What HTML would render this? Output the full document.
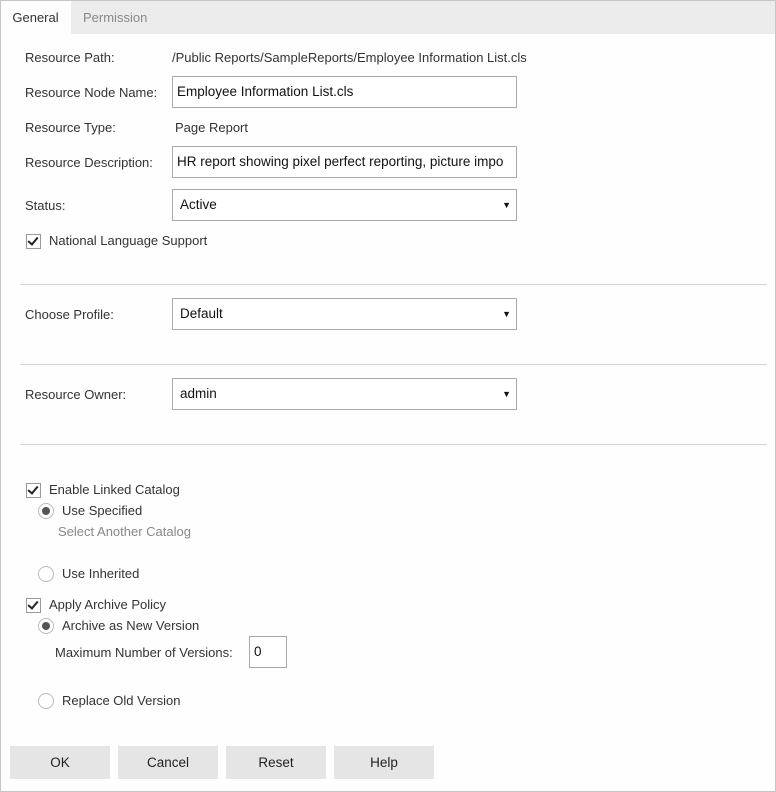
<!DOCTYPE html><html><head><style>
body{margin:0;width:776px;height:792px;font-family:"Liberation Sans",sans-serif;font-size:13px;color:#333;}
.w{position:absolute;left:0;top:0;width:776px;height:792px;background:#fdfefd;}
.bd{position:absolute;left:0;top:0;width:774px;height:790px;border:1px solid #c6c6c6;}
.tabs{position:absolute;left:0;top:0;width:776px;height:34px;background:#ececec;}
.t{position:absolute;top:0;height:34px;line-height:36px;font-size:13px;}
.a{position:absolute;white-space:nowrap;}
.in{position:absolute;left:172px;width:339px;height:30px;border:1px solid #aaa;background:#fff;line-height:30px;padding-left:4px;box-sizing:content-box;color:#111;overflow:hidden;white-space:nowrap;font-size:13.5px}
.sel{padding-left:7px;width:336px}
.arr{position:absolute;right:5px;top:0;font-size:9px}
.hr{position:absolute;left:20px;width:747px;height:1px;background:#d6d6d6;}
.cb{position:absolute;width:13px;height:13px;border:1px solid #999;background:#fff;}
.cb:after{content:"";position:absolute;left:3px;top:0px;width:4px;height:8px;border:solid #222;border-width:0 2px 2px 0;transform:rotate(40deg);}
.rd{position:absolute;width:14px;height:14px;border:1px solid #bbb;border-radius:50%;background:#fff;}
.rd.on:after{content:"";position:absolute;left:3px;top:3px;width:8px;height:8px;border-radius:50%;background:#555;}
.b{position:absolute;top:746px;width:100px;height:33px;background:#e5e5e5;text-align:center;line-height:33px;color:#222;font-size:13.5px}
</style></head><body><div class="w">
<div class="tabs"><div class="t" style="left:0;width:71px;background:#fdfefd;text-align:center;color:#333">General</div><div class="t" style="left:83px;color:#888">Permission</div></div>
<div class="a" style="left:25px;top:50px">Resource Path:</div>
<div class="a" style="left:172px;top:50px">/Public Reports/SampleReports/Employee Information List.cls</div>
<div class="a" style="left:25px;top:85px">Resource Node Name:</div>
<div class="in" style="top:76px">Employee Information List.cls</div>
<div class="a" style="left:25px;top:120px">Resource Type:</div>
<div class="a" style="left:175px;top:120px">Page Report</div>
<div class="a" style="left:25px;top:155px">Resource Description:</div>
<div class="in" style="top:146px">HR report showing pixel perfect reporting, picture impo</div>
<div class="a" style="left:25px;top:198px">Status:</div>
<div class="in sel" style="top:189px">Active<span class="arr">▼</span></div>
<div class="cb" style="left:26px;top:234px"></div>
<div class="a" style="left:49px;top:233px">National Language Support</div>
<div class="hr" style="top:284px"></div>
<div class="a" style="left:25px;top:307px">Choose Profile:</div>
<div class="in sel" style="top:298px">Default<span class="arr">▼</span></div>
<div class="hr" style="top:364px"></div>
<div class="a" style="left:25px;top:387px">Resource Owner:</div>
<div class="in sel" style="top:378px">admin<span class="arr">▼</span></div>
<div class="hr" style="top:444px"></div>
<div class="cb" style="left:26px;top:483px"></div>
<div class="a" style="left:49px;top:482px">Enable Linked Catalog</div>
<div class="rd" style="left:38px;top:503px" class="on"></div>
<div class="a" style="left:62px;top:503px">Use Specified</div>
<div class="a" style="left:58px;top:524px;color:#888">Select Another Catalog</div>
<div class="rd" style="left:38px;top:566px"></div>
<div class="a" style="left:62px;top:566px">Use Inherited</div>
<div class="cb" style="left:26px;top:598px"></div>
<div class="a" style="left:49px;top:597px">Apply Archive Policy</div>
<div class="rd on" style="left:38px;top:618px"></div>
<div class="a" style="left:62px;top:618px">Archive as New Version</div>
<div class="a" style="left:55px;top:645px">Maximum Number of Versions:</div>
<div class="in" style="left:249px;top:636px;width:32px">0</div>
<div class="rd" style="left:38px;top:693px"></div>
<div class="a" style="left:62px;top:693px">Replace Old Version</div>
<div class="b" style="left:10px">OK</div><div class="b" style="left:118px">Cancel</div><div class="b" style="left:226px">Reset</div><div class="b" style="left:334px">Help</div>
<div class="bd"></div>
</div>
<style>.rd[style*="503px"]:after{content:"";position:absolute;left:3px;top:3px;width:8px;height:8px;border-radius:50%;background:#555;}</style>
</body></html>
